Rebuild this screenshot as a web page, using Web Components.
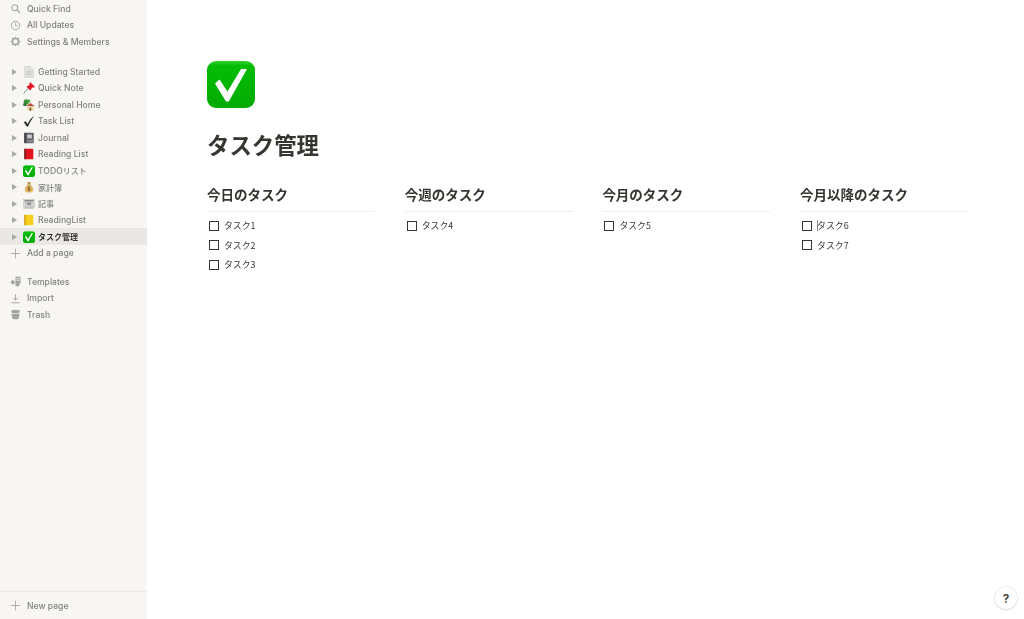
<!DOCTYPE html>
<html lang="ja">
<head>
<meta charset="utf-8">
<title>タスク管理</title>
<style>
  html, body { margin: 0; height: 100%; background: #fff; }
  body {
    display: flex;
    height: 619px;
    overflow: hidden;
    color: #37352f;
    font-family: Inter, "Noto Sans CJK JP", sans-serif;
  }
</style>
</head>
<body>
<app-sidebar>
  <nav-item icon="search">Quick Find</nav-item>
  <nav-item icon="clock">All Updates</nav-item>
  <nav-item icon="gear">Settings &amp; Members</nav-item>
  <page-list style="margin-top:13.25px">
    <page-item emoji="doc">Getting Started</page-item>
    <page-item emoji="pin">Quick Note</page-item>
    <page-item emoji="home">Personal Home</page-item>
    <page-item emoji="tick">Task List</page-item>
    <page-item emoji="journal">Journal</page-item>
    <page-item emoji="redbook">Reading List</page-item>
    <page-item emoji="check">TODO<small>リスト</small></page-item>
    <page-item emoji="money"><small>家計簿</small></page-item>
    <page-item emoji="news"><small>記事</small></page-item>
    <page-item emoji="yellowbook">ReadingList</page-item>
    <page-item emoji="check" selected><small>タスク管理</small></page-item>
  </page-list>
  <nav-item icon="plus">Add a page</nav-item>
  <nav-item icon="templates" style="margin-top:12px">Templates</nav-item>
  <nav-item icon="import">Import</nav-item>
  <nav-item icon="trash">Trash</nav-item>
  <nav-item slot="footer" icon="plus">New page</nav-item>
</app-sidebar>
<page-view title="タスク管理">
  <task-column heading="今日のタスク">
    <task-item>タスク1</task-item>
    <task-item>タスク2</task-item>
    <task-item>タスク3</task-item>
  </task-column>
  <task-column heading="今週のタスク">
    <task-item>タスク4</task-item>
  </task-column>
  <task-column heading="今月のタスク">
    <task-item>タスク5</task-item>
  </task-column>
  <task-column heading="今月以降のタスク">
    <task-item caret>タスク6</task-item>
    <task-item>タスク7</task-item>
  </task-column>
</page-view>
<help-button></help-button>

<script>
// green tick tile is used three times, so keep it in one place
const checkTile = `
  <svg viewBox="0 0 48 48" width="100%" height="100%">
    <defs><linearGradient id="g" x1="0" y1="0" x2="0" y2="1">
      <stop offset="0" stop-color="#35d030"/><stop offset=".1" stop-color="#05bd05"/><stop offset="1" stop-color="#03aa03"/>
    </linearGradient></defs>
    <rect x="0" y="1" width="48" height="47" rx="9" fill="url(#g)"/>
    <path d="M8 23.5 L12.5 19.5 L20.5 31.5 L34 9 L40 9 L21.8 41.5 L19 41.5 Z" fill="#fff"/>
  </svg>`;

const navIcons = {
  search: '<circle cx="6" cy="6" r="3.8" stroke-width="1.3"/><path d="M9 9 12.8 12.8" stroke-width="1.7"/>',
  clock: '<circle cx="7" cy="7" r="5.4" stroke-width="1.2"/><path d="M7 3.6V7.3H10"/>',
  gear: '<circle cx="7" cy="7" r="3.8" stroke-width="1.8"/><path d="M7 .8V3M7 11V13.2M.8 7H3M11 7H13.2M2.6 2.6 4.2 4.2M9.8 9.8 11.4 11.4M2.6 11.4 4.2 9.8M9.8 4.2 11.4 2.6" stroke-width="1.7"/>',
  plus: '<path d="M7 1V13M1 7H13" stroke-width="1.1"/>',
  templates: '<path d="M7 1H13.4V9.4H7Z" fill="#a5a4a0" stroke="none"/><path d="M8.4 3.4H12M8.4 5.4H12" stroke="#f7f6f3"/><path d="M3.6 4.8 6.8 8 3.6 11.2 .4 8Z" fill="#a5a4a0" stroke="none"/><circle cx="9.6" cy="10.6" r="2.8" fill="#a5a4a0" stroke="none"/>',
  import: '<path d="M7 1.5V9M3.8 6 7 9.2 10.2 6M1.8 12.4H12.2" stroke-width="1.2"/>',
  trash: '<ellipse cx="7" cy="3.2" rx="5.6" ry="2.4" fill="#a5a4a0" stroke="none"/><path d="M1.8 5.6C4 6.8 10 6.8 12.2 5.6L11 12C9.8 13.6 4.2 13.6 3 12Z" fill="#a5a4a0" stroke="none"/>'
};

const emojis = {
  doc: `<svg viewBox="0 0 14 14"><path d="M2 .5H8.5L12 4V13.5H2Z" fill="#e3e2e0" stroke="#c4c3c1" stroke-width=".6"/><path d="M8.5 .5V4H12" fill="#f4f4f3" stroke="#c4c3c1" stroke-width=".5"/><path d="M4 6.5H10M4 8.3H10M4 10.1H10" stroke="#bdbcba" stroke-width=".7"/></svg>`,
  pin: `<svg viewBox="0 0 14 14"><path d="M.8 13.4 6 7.4" stroke="#7d8690" stroke-width="1.1"/><path d="M8.6 .4 13.8 5.6 12.6 6.6 10.8 6.2 8.6 10 4 5.4 7.8 3.2 7.4 1.6Z" fill="#e5141f"/></svg>`,
  home: `<svg viewBox="0 0 14 14"><circle cx="3.8" cy="3.4" r="3" fill="#3f9138"/><circle cx="2.2" cy="6.4" r="2.1" fill="#2f7b30"/><circle cx="6.6" cy="2.4" r="1.9" fill="#4ea244"/><path d="M3.6 8.6 8.8 4.6 13.8 8.6Z" fill="#b5523a"/><rect x="4.8" y="8.6" width="7.8" height="5" fill="#f0dcae"/><rect x="7.6" y="10" width="2" height="3.6" fill="#7a5230"/></svg>`,
  tick: `<svg viewBox="0 0 14 14"><path d="M1 8.4 3 7.2 5.4 10.4C7.4 6.4 9.6 3.4 13 1.2 10.2 4.8 7.8 8.8 6 13.4H4.4Z" fill="#2a2a2c"/></svg>`,
  journal: `<svg viewBox="0 0 14 14"><rect x="1.5" y="1" width="11" height="12" rx=".8" fill="#626268"/><rect x="5" y="3" width="5.4" height="4.4" fill="#c9c9cb"/><path d="M5 9.2H12.5V12.2H5Z" fill="#87878c"/><rect x="1.5" y="1" width="2" height="12" fill="#424247"/></svg>`,
  redbook: `<svg viewBox="0 0 14 14"><rect x="1.5" y="1" width="10.5" height="12" rx=".7" fill="#e2131b"/><rect x="1.5" y="1" width="2.2" height="12" fill="#7a1f22"/></svg>`,
  check: checkTile,
  money: `<svg viewBox="0 0 14 14"><path d="M5 1.2H9L8.2 3.4H5.8Z" fill="#c99a4e"/><rect x="5.4" y="3.2" width="3.2" height="1" fill="#8a6328"/><path d="M5.6 4.2H8.4C11 6 12.2 8.6 11.8 11 11.4 13 9.4 13.4 7 13.4S2.6 13 2.2 11C1.8 8.6 3 6 5.6 4.2Z" fill="#e2b566"/><path d="M7 6.4V11.8M8.4 7.6C7.4 6.8 5.6 7.2 5.8 8.3 6 9.4 8.4 8.8 8.4 10 8.4 11.2 6.4 11.4 5.5 10.5" fill="none" stroke="#5b3f18" stroke-width=".75"/></svg>`,
  news: `<svg viewBox="0 0 14 14"><rect x=".8" y="1.6" width="12.4" height="10.8" fill="#dddcda" stroke="#a8a7a5" stroke-width=".4"/><rect x="1.6" y="2.4" width="10.8" height="1.6" fill="#8a898c"/><rect x="4.4" y="5" width="5.2" height="3.4" fill="#99989a"/><path d="M1.8 5.6H3.8M1.8 7.2H3.8M10.2 5.6H12.2M10.2 7.2H12.2M1.8 9.8H12.2M1.8 11.2H12.2" stroke="#a9a8aa" stroke-width=".6"/></svg>`,
  yellowbook: `<svg viewBox="0 0 14 14"><rect x="1.5" y="1" width="10.5" height="12" rx="1" fill="#f8cf1e"/><rect x="1.5" y="1" width="1.6" height="12" rx=".6" fill="#cf9f1c"/></svg>`
};

class AppSidebar extends HTMLElement {
  connectedCallback() {
    const shadow = this.attachShadow({ mode: 'open' });
    shadow.innerHTML = `
      <style>
        :host {
          display: flex;
          flex-direction: column;
          flex: 0 0 147px;
          height: 619px;
          background: #f7f6f3;
          color: rgba(55, 53, 47, 0.62);
        }
        .list { flex: 1; display: flex; flex-direction: column; padding-top: 0.5px; filter: blur(0.3px); }
        .footer {
          height: 28px;
          border-top: 1px solid #e9e8e4;
          box-sizing: border-box;
          display: flex;
          align-items: center;
          filter: blur(0.3px);
        }
        ::slotted([slot="footer"]) { flex: 1; }
      </style>
      <div class="list"><slot></slot></div>
      <div class="footer"><slot name="footer"></slot></div>
    `;
  }
}

class NavItem extends HTMLElement {
  connectedCallback() {
    const shadow = this.attachShadow({ mode: 'open' });
    const icon = navIcons[this.getAttribute('icon')] ?? '';
    shadow.innerHTML = `
      <style>
        :host {
          display: flex;
          align-items: center;
          height: 16.5px;
          padding-left: 10px;
          font-size: 8.6px;
          font-weight: 500;
          white-space: nowrap;
        }
        svg {
          width: 11px;
          height: 11px;
          margin-right: 6px;
          fill: none;
          stroke: #a5a4a0;
          stroke-width: 1.1;
          flex: none;
        }
      </style>
      <svg viewBox="0 0 14 14">${icon}</svg>
      <span><slot></slot></span>
    `;
  }
}

class PageList extends HTMLElement {
  connectedCallback() {
    const shadow = this.attachShadow({ mode: 'open' });
    shadow.innerHTML = `
      <style>:host { display: block; }</style>
      <slot></slot>
    `;
  }
}

class PageItem extends HTMLElement {
  connectedCallback() {
    const shadow = this.attachShadow({ mode: 'open' });
    const emoji = emojis[this.getAttribute('emoji')] ?? '';
    shadow.innerHTML = `
      <style>
        :host {
          display: flex;
          align-items: center;
          height: 16.5px;
          padding-left: 12px;
          font-size: 8.6px;
          font-weight: 500;
          white-space: nowrap;
        }
        :host([selected]) {
          background: #e9e8e5;
          color: #37352f;
          font-weight: 700;
        }
        .arrow {
          width: 0;
          height: 0;
          border-left: 5px solid #a8a7a3;
          border-top: 3px solid transparent;
          border-bottom: 3px solid transparent;
          margin-right: 6px;
        }
        .emoji { width: 12px; height: 12px; margin-right: 3px; flex: none; display: flex; }
        .emoji svg { width: 100%; height: 100%; }
        ::slotted(small) { font-size: 8px; }
      </style>
      <span class="arrow"></span>
      <span class="emoji">${emoji}</span>
      <span><slot></slot></span>
    `;
  }
}

class PageView extends HTMLElement {
  connectedCallback() {
    const shadow = this.attachShadow({ mode: 'open' });
    shadow.innerHTML = `
      <style>
        :host {
          display: block;
          flex: 1;
          padding: 60px 56px 0 60px;
          min-width: 0;
          filter: blur(0.3px);
        }
        .icon { width: 48px; height: 48px; }
        h1 {
          margin: 18px 0 0;
          font: 700 22.4px/36px "Noto Sans CJK JP", sans-serif;
          color: #37352f;
        }
        .columns {
          display: grid;
          grid-template-columns: repeat(4, 168px);
          column-gap: 29.7px;
          margin-top: 22px;
        }
      </style>
      <div class="icon">${checkTile}</div>
      <h1>${this.getAttribute('title')}</h1>
      <div class="columns"><slot></slot></div>
    `;
  }
}

class TaskColumn extends HTMLElement {
  connectedCallback() {
    const shadow = this.attachShadow({ mode: 'open' });
    shadow.innerHTML = `
      <style>
        :host { display: block; }
        h2 {
          margin: 0 0 4px;
          height: 28px;
          box-sizing: border-box;
          border-bottom: 1px solid #efefee;
          font: 700 13.5px/20px "Noto Sans CJK JP", sans-serif;
          color: #37352f;
        }
      </style>
      <h2>${this.getAttribute('heading')}</h2>
      <slot></slot>
    `;
  }
}

class TaskItem extends HTMLElement {
  connectedCallback() {
    const shadow = this.attachShadow({ mode: 'open' });
    shadow.innerHTML = `
      <style>
        :host {
          display: flex;
          align-items: center;
          height: 19.5px;
          padding-left: 2px;
          font: 400 8.9px "Noto Sans CJK JP", sans-serif;
          color: #37352f;
        }
        .box {
          width: 10px;
          height: 10px;
          box-sizing: border-box;
          border: 1.3px solid #37352f;
          margin-right: 5px;
          flex: none;
        }
        .caret { position: relative; }
        :host([caret]) .caret::before {
          content: '';
          position: absolute;
          left: 0;
          top: 1px;
          bottom: 1px;
          width: 1px;
          background: #8a8985;
        }
      </style>
      <span class="box"></span>
      <span class="caret"><slot></slot></span>
    `;
  }
}

class HelpButton extends HTMLElement {
  connectedCallback() {
    const shadow = this.attachShadow({ mode: 'open' });
    shadow.innerHTML = `
      <style>
        :host {
          position: absolute;
          left: 995px;
          top: 587px;
          width: 22px;
          height: 22px;
          border-radius: 50%;
          background: #fff;
          box-shadow: 0 0 0 1px rgba(15, 15, 15, 0.05), 0 1px 3px rgba(15, 15, 15, 0.1);
          display: flex;
          align-items: center;
          justify-content: center;
          font: 600 12px Inter, sans-serif;
          color: #37352f;
        }
      </style>
      ?
    `;
  }
}

customElements.define('app-sidebar', AppSidebar);
customElements.define('nav-item', NavItem);
customElements.define('page-list', PageList);
customElements.define('page-item', PageItem);
customElements.define('page-view', PageView);
customElements.define('task-column', TaskColumn);
customElements.define('task-item', TaskItem);
customElements.define('help-button', HelpButton);
</script>
</body>
</html>
